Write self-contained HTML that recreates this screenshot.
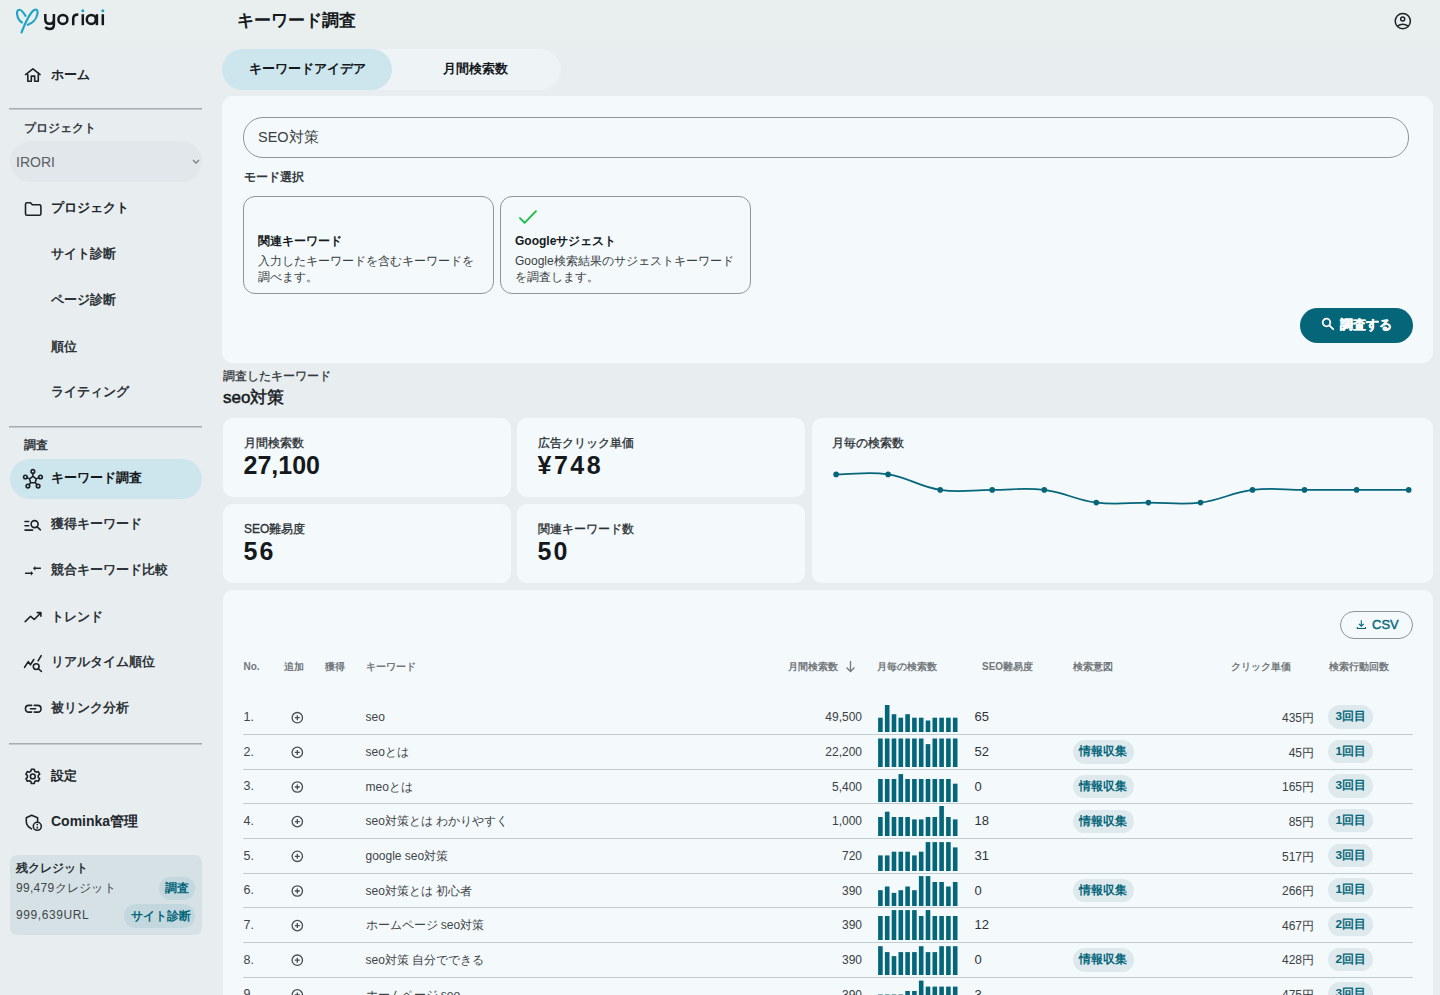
<!DOCTYPE html>
<html lang="ja"><head><meta charset="utf-8"><title>キーワード調査</title>
<style>
html,body{margin:0;padding:0}
body{width:1440px;height:995px;overflow:hidden;position:relative;background:#e8edf0;font-family:"Liberation Sans",sans-serif}
.t{position:absolute;white-space:nowrap}
.b{position:absolute}
</style></head><body>
<div class="b" style="left:0px;top:0px;width:1440px;height:70px;background:linear-gradient(#e8efee 0px,#e8efee 30px,#e8edf0 65px)"></div>
<svg class="b" style="left:0px;top:0px;" width="110" height="40" viewBox="0 0 110 40"><path d="M25.5 15.9 C23.5 12.5 21.5 9.8 19.5 9.8 C17.3 9.8 16.7 12 17.1 14.5 C17.7 18 19.5 21 22 22.5" fill="none" stroke="#1ea3c6" stroke-width="2.1" stroke-linecap="round"/>
<path d="M21.5 32.5 C24 26 28 17 31.5 12.5 C33 10.5 34.5 9.5 35.7 9.5 C37.6 9.5 37.9 12 37.3 14.5 C36.2 19.5 32 23.5 27.8 24.8" fill="none" stroke="#1ea3c6" stroke-width="2.1" stroke-linecap="round"/>
<g fill="none" stroke="#15191c" stroke-width="2.5">
<path d="M45.3 14 V19.3 Q45.3 23.8 49.6 23.8 Q53.9 23.8 53.9 19.3 V14 M53.9 19 V25 Q53.9 29 49.6 29 Q47 29 45.3 27.2"/>
<circle cx="62.9" cy="19.4" r="4.5"/>
<path d="M73.2 25.2 V18.8 Q73.2 14.6 78.3 14.6"/>
<path d="M82.8 14.2 V25.2"/>
<circle cx="91.3" cy="19.4" r="4.5"/>
<path d="M96.9 14.2 V25.2"/>
<path d="M102.8 14.2 V25.2"/>
</g>
<circle cx="82.8" cy="10.8" r="1.5" fill="#1ea3c6"/><circle cx="102.8" cy="10.8" r="1.5" fill="#1ea3c6"/></svg>
<div class="t" style="left:51px;top:66.7px;font-size:13px;line-height:15.6px;font-weight:700;color:#22272b;">ホーム</div>
<div class="b" style="left:9px;top:108px;width:193px;height:2px;background:linear-gradient(#a6adb0 50%,#c4cacd 50%)"></div>
<div class="t" style="left:24px;top:121.3px;font-size:12px;line-height:14.4px;font-weight:700;color:#33393d;">プロジェクト</div>
<div class="b" style="left:10px;top:141px;width:192px;height:41px;background:#e1e7ea;border-radius:21px"></div>
<div class="t" style="left:16px;top:153.6px;font-size:14px;line-height:16.8px;font-weight:400;color:#5a6063;">IRORI</div>
<svg class="b" style="left:192px;top:159px;" width="8" height="6" viewBox="0 0 8 6"><path d="M1 1 L4 4 L7 1" fill="none" stroke="#7d8285" stroke-width="1.3"/></svg>
<div class="t" style="left:51px;top:199.7px;font-size:13px;line-height:15.6px;font-weight:700;color:#22272b;">プロジェクト</div>
<div class="t" style="left:51px;top:246.2px;font-size:13px;line-height:15.6px;font-weight:700;color:#2e3438;">サイト診断</div>
<div class="t" style="left:51px;top:292.2px;font-size:13px;line-height:15.6px;font-weight:700;color:#2e3438;">ページ診断</div>
<div class="t" style="left:51px;top:338.7px;font-size:13px;line-height:15.6px;font-weight:700;color:#2e3438;">順位</div>
<div class="t" style="left:51px;top:384.2px;font-size:13px;line-height:15.6px;font-weight:700;color:#2e3438;">ライティング</div>
<div class="b" style="left:9px;top:426px;width:193px;height:2px;background:linear-gradient(#a6adb0 50%,#c4cacd 50%)"></div>
<div class="t" style="left:24px;top:438.3px;font-size:12px;line-height:14.4px;font-weight:700;color:#33393d;">調査</div>
<div class="b" style="left:10px;top:459px;width:192px;height:40px;background:#cde5ed;border-radius:20px"></div>
<div class="t" style="left:51px;top:470.2px;font-size:13px;line-height:15.6px;font-weight:700;color:#15191c;">キーワード調査</div>
<div class="t" style="left:51px;top:516.2px;font-size:13px;line-height:15.6px;font-weight:700;color:#2e3438;">獲得キーワード</div>
<div class="t" style="left:51px;top:562.2px;font-size:13px;line-height:15.6px;font-weight:700;color:#2e3438;">競合キーワード比較</div>
<div class="t" style="left:51px;top:608.7px;font-size:13px;line-height:15.6px;font-weight:700;color:#2e3438;">トレンド</div>
<div class="t" style="left:51px;top:654.2px;font-size:13px;line-height:15.6px;font-weight:700;color:#2e3438;">リアルタイム順位</div>
<div class="t" style="left:51px;top:700.2px;font-size:13px;line-height:15.6px;font-weight:700;color:#2e3438;">被リンク分析</div>
<div class="b" style="left:9px;top:743px;width:193px;height:2px;background:linear-gradient(#a6adb0 50%,#c4cacd 50%)"></div>
<div class="t" style="left:51px;top:768.2px;font-size:13px;line-height:15.6px;font-weight:700;color:#22272b;">設定</div>
<div class="t" style="left:51px;top:814.2px;font-size:13px;line-height:15.6px;font-weight:700;color:#22272b;font-size:14px">Cominka管理</div>
<div class="b" style="left:10px;top:855px;width:192px;height:80px;background:#d6e1e6;border-radius:7px"></div>
<div class="t" style="left:16px;top:860.8px;font-size:12px;line-height:14.4px;font-weight:700;color:#2b3134;">残クレジット</div>
<div class="t" style="left:16px;top:881.3px;font-size:12px;line-height:14.4px;font-weight:400;color:#3f4548;letter-spacing:0.3px">99,479クレジット</div>
<div class="t" style="left:16px;top:908.3px;font-size:12px;line-height:14.4px;font-weight:400;color:#3f4548;letter-spacing:0.6px">999,639URL</div>
<div class="b" style="left:159px;top:877px;width:36px;height:23px;background:#c3d8de;border-radius:12px"></div>
<div class="t" style="left:165px;top:881.3px;font-size:12px;line-height:14.4px;font-weight:700;color:#05667a;">調査</div>
<div class="b" style="left:124px;top:904px;width:71px;height:24px;background:#c3d8de;border-radius:12px"></div>
<div class="t" style="left:131px;top:908.8px;font-size:12px;line-height:14.4px;font-weight:700;color:#05667a;">サイト診断</div>
<div class="t" style="left:237px;top:11.1px;font-size:17px;line-height:20.4px;font-weight:700;color:#15191c;">キーワード調査</div>
<div class="b" style="left:222px;top:49px;width:339px;height:41px;background:#eef3f6;border-radius:21px"></div>
<div class="b" style="left:222px;top:49px;width:170px;height:41px;background:#cde5ed;border-radius:21px"></div>
<div class="t" style="left:249px;top:61.2px;font-size:13px;line-height:15.6px;font-weight:700;color:#15191c;">キーワードアイデア</div>
<div class="t" style="left:443px;top:61.2px;font-size:13px;line-height:15.6px;font-weight:700;color:#15191c;">月間検索数</div>
<div class="b" style="left:222px;top:96px;width:1211px;height:267px;background:#f4f9fc;border-radius:11px"></div>
<div class="b" style="left:243px;top:117px;width:1166px;height:41px;border:1px solid #8e9699;border-radius:20px;box-sizing:border-box"></div>
<div class="t" style="left:258px;top:129.3px;font-size:14.5px;line-height:17.4px;font-weight:400;color:#3a3f42;">SEO対策</div>
<div class="t" style="left:244px;top:169.8px;font-size:12px;line-height:14.4px;font-weight:700;color:#33393d;">モード選択</div>
<div class="b" style="left:243px;top:196px;width:251px;height:98px;border:1px solid #8e9699;border-radius:12px;box-sizing:border-box"></div>
<div class="b" style="left:500px;top:196px;width:251px;height:98px;border:1px solid #8e9699;border-radius:12px;box-sizing:border-box"></div>
<div class="t" style="left:258px;top:233.8px;font-size:12px;line-height:14.4px;font-weight:700;color:#15191c;">関連キーワード</div>
<div class="t" style="left:258px;top:253.8px;font-size:12px;line-height:14.4px;font-weight:400;color:#3a3f42;">入力したキーワードを含むキーワードを</div>
<div class="t" style="left:258px;top:269.8px;font-size:12px;line-height:14.4px;font-weight:400;color:#3a3f42;">調べます。</div>
<div class="t" style="left:515px;top:233.8px;font-size:12px;line-height:14.4px;font-weight:700;color:#15191c;">Googleサジェスト</div>
<div class="t" style="left:515px;top:253.8px;font-size:12px;line-height:14.4px;font-weight:400;color:#3a3f42;">Google検索結果のサジェストキーワード</div>
<div class="t" style="left:515px;top:269.8px;font-size:12px;line-height:14.4px;font-weight:400;color:#3a3f42;">を調査します。</div>
<div class="b" style="left:1300px;top:308px;width:113px;height:35px;background:#05667a;border-radius:18px"></div>
<svg class="b" style="left:1321px;top:317px;" width="14" height="14" viewBox="0 0 14 14"><circle cx="5.5" cy="5.5" r="3.8" fill="none" stroke="#fff" stroke-width="1.8"/><path d="M8.3 8.3 L12.2 12.2" stroke="#fff" stroke-width="1.9" stroke-linecap="round"/></svg>
<div class="t" style="left:1340px;top:317.2px;font-size:13px;line-height:15.6px;font-weight:700;color:#ffffff;-webkit-text-stroke:0.3px #fff">調査する</div>
<div class="t" style="left:223px;top:368.8px;font-size:12px;line-height:14.4px;font-weight:400;color:#33393c;-webkit-text-stroke:0.3px #33393c">調査したキーワード</div>
<div class="t" style="left:223px;top:388.3px;font-size:17px;line-height:20.4px;font-weight:400;color:#15191c;-webkit-text-stroke:0.5px #15191c">seo対策</div>
<div class="b" style="left:223px;top:418px;width:288px;height:79px;background:#f4f9fc;border-radius:10px"></div>
<div class="t" style="left:244px;top:435.8px;font-size:12px;line-height:14.4px;font-weight:400;color:#2a3033;-webkit-text-stroke:0.3px #2a3033">月間検索数</div>
<div class="t" style="left:243.5px;top:449.5px;font-size:25px;line-height:30.0px;font-weight:700;color:#15191c;letter-spacing:0px">27,100</div>
<div class="b" style="left:517px;top:418px;width:288px;height:79px;background:#f4f9fc;border-radius:10px"></div>
<div class="t" style="left:538px;top:435.8px;font-size:12px;line-height:14.4px;font-weight:400;color:#2a3033;-webkit-text-stroke:0.3px #2a3033">広告クリック単価</div>
<div class="t" style="left:537.5px;top:449.5px;font-size:25px;line-height:30.0px;font-weight:700;color:#15191c;letter-spacing:2.5px">¥748</div>
<div class="b" style="left:223px;top:504px;width:288px;height:79px;background:#f4f9fc;border-radius:10px"></div>
<div class="t" style="left:244px;top:521.8px;font-size:12px;line-height:14.4px;font-weight:400;color:#2a3033;-webkit-text-stroke:0.3px #2a3033">SEO難易度</div>
<div class="t" style="left:243.5px;top:535.5px;font-size:25px;line-height:30.0px;font-weight:700;color:#15191c;letter-spacing:2px">56</div>
<div class="b" style="left:517px;top:504px;width:288px;height:79px;background:#f4f9fc;border-radius:10px"></div>
<div class="t" style="left:538px;top:521.8px;font-size:12px;line-height:14.4px;font-weight:400;color:#2a3033;-webkit-text-stroke:0.3px #2a3033">関連キーワード数</div>
<div class="t" style="left:537.5px;top:535.5px;font-size:25px;line-height:30.0px;font-weight:700;color:#15191c;letter-spacing:2px">50</div>
<div class="b" style="left:812px;top:418px;width:621px;height:165px;background:#f4f9fc;border-radius:10px"></div>
<div class="t" style="left:832px;top:436.3px;font-size:12px;line-height:14.4px;font-weight:400;color:#2a3033;-webkit-text-stroke:0.3px #2a3033">月毎の検索数</div>
<svg class="b" style="left:0;top:0" width="1440" height="995"><path d="M836.1 474.4 C856.9 474.4 867.8 471.4 888.1 474.4 C909.4 477.6 918.9 486.7 940.2 489.9 C960.6 492.9 971.4 489.9 992.2 489.9 C1013.1 489.9 1023.8 487.4 1044.3 489.9 C1065.4 492.5 1075.2 500.0 1096.3 502.6 C1116.9 505.1 1127.6 502.6 1148.4 502.6 C1169.2 502.6 1179.9 505.1 1200.5 502.6 C1221.6 500.0 1231.4 492.5 1252.5 489.9 C1273.0 487.4 1283.7 489.9 1304.5 489.9 C1325.4 489.9 1335.8 489.9 1356.6 489.9 C1377.4 489.9 1387.8 489.9 1408.7 489.9" fill="none" stroke="#05667a" stroke-width="1.7"/><circle cx="836.1" cy="474.4" r="2.8" fill="#05667a"/><circle cx="888.1" cy="474.4" r="2.8" fill="#05667a"/><circle cx="940.2" cy="489.9" r="2.8" fill="#05667a"/><circle cx="992.2" cy="489.9" r="2.8" fill="#05667a"/><circle cx="1044.3" cy="489.9" r="2.8" fill="#05667a"/><circle cx="1096.3" cy="502.6" r="2.8" fill="#05667a"/><circle cx="1148.4" cy="502.6" r="2.8" fill="#05667a"/><circle cx="1200.5" cy="502.6" r="2.8" fill="#05667a"/><circle cx="1252.5" cy="489.9" r="2.8" fill="#05667a"/><circle cx="1304.5" cy="489.9" r="2.8" fill="#05667a"/><circle cx="1356.6" cy="489.9" r="2.8" fill="#05667a"/><circle cx="1408.7" cy="489.9" r="2.8" fill="#05667a"/></svg>
<div class="b" style="left:223px;top:590px;width:1210px;height:420px;background:#f4f9fc;border-radius:10px"></div>
<div class="b" style="left:1340px;top:611px;width:73px;height:28px;border:1px solid #8e9699;border-radius:15px;box-sizing:border-box"></div>
<div class="t" style="left:1372px;top:617.0px;font-size:13px;line-height:15.6px;font-weight:400;color:#05667a;-webkit-text-stroke:0.4px #05667a">CSV</div>
<div class="t" style="left:243.5px;top:660.6px;font-size:10px;line-height:12.0px;font-weight:700;color:#72787b;">No.</div>
<div class="t" style="left:284px;top:660.6px;font-size:10px;line-height:12.0px;font-weight:700;color:#72787b;">追加</div>
<div class="t" style="left:324.5px;top:660.6px;font-size:10px;line-height:12.0px;font-weight:700;color:#72787b;">獲得</div>
<div class="t" style="left:365.5px;top:660.6px;font-size:10px;line-height:12.0px;font-weight:700;color:#72787b;">キーワード</div>
<div class="t" style="left:788px;top:660.6px;font-size:10px;line-height:12.0px;font-weight:700;color:#72787b;">月間検索数</div>
<div class="t" style="left:876.5px;top:660.6px;font-size:10px;line-height:12.0px;font-weight:700;color:#72787b;">月毎の検索数</div>
<div class="t" style="left:982px;top:660.6px;font-size:10px;line-height:12.0px;font-weight:700;color:#72787b;">SEO難易度</div>
<div class="t" style="left:1073px;top:660.6px;font-size:10px;line-height:12.0px;font-weight:700;color:#72787b;">検索意図</div>
<div class="t" style="left:1231px;top:660.6px;font-size:10px;line-height:12.0px;font-weight:700;color:#72787b;">クリック単価</div>
<div class="t" style="left:1328.5px;top:660.6px;font-size:10px;line-height:12.0px;font-weight:700;color:#72787b;">検索行動回数</div>
<svg class="b" style="left:845px;top:660px;" width="11" height="13" viewBox="0 0 11 13"><path d="M5.5 1 V11.5 M1.5 7.5 L5.5 11.5 L9.5 7.5" fill="none" stroke="#72787b" stroke-width="1.3"/></svg>
<div class="t" style="left:243.5px;top:710.1px;font-size:12.5px;line-height:15.0px;font-weight:400;color:#3f4548;">1.</div>
<div class="t" style="left:365.5px;top:710.4px;font-size:12px;line-height:14.4px;font-weight:400;color:#3f4548;">seo</div>
<div class="t" style="right:578px;top:710.4px;font-size:12px;line-height:14.4px;font-weight:400;color:#3a4044;text-align:right;">49,500</div>
<svg class="b" style="left:878.3px;top:702.3px" width="80" height="30"><rect x="0.1" y="15.7" width="4.6" height="14.3" fill="#05667a"/><rect x="6.9" y="3.0" width="4.6" height="27.0" fill="#05667a"/><rect x="13.7" y="12.2" width="4.6" height="17.8" fill="#05667a"/><rect x="20.5" y="15.7" width="4.6" height="14.3" fill="#05667a"/><rect x="27.3" y="12.2" width="4.6" height="17.8" fill="#05667a"/><rect x="34.1" y="15.7" width="4.6" height="14.3" fill="#05667a"/><rect x="40.9" y="15.7" width="4.6" height="14.3" fill="#05667a"/><rect x="47.7" y="18.5" width="4.6" height="11.5" fill="#05667a"/><rect x="54.5" y="15.7" width="4.6" height="14.3" fill="#05667a"/><rect x="61.3" y="15.7" width="4.6" height="14.3" fill="#05667a"/><rect x="68.1" y="15.7" width="4.6" height="14.3" fill="#05667a"/><rect x="74.9" y="15.7" width="4.6" height="14.3" fill="#05667a"/></svg>
<div class="t" style="left:974.5px;top:709.3px;font-size:13px;line-height:15.6px;font-weight:400;color:#2e3438;">65</div>
<div class="t" style="right:126px;top:710.9px;font-size:12px;line-height:14.4px;font-weight:400;color:#3a4044;text-align:right;">435円</div>
<div class="t" style="left:1328px;top:705.0px;height:23.5px;line-height:23px;padding:0 6.5px 0 7.5px;border-radius:12px;background:#dde9ed;font-size:11.8px;font-weight:700;color:#05667a">3回目</div>
<div class="b" style="left:243px;top:734.0px;width:1170px;height:1px;background:#bfccd1"></div>
<div class="t" style="left:243.5px;top:744.8px;font-size:12.5px;line-height:15.0px;font-weight:400;color:#3f4548;">2.</div>
<div class="t" style="left:365.5px;top:745.0px;font-size:12px;line-height:14.4px;font-weight:400;color:#3f4548;">seoとは</div>
<div class="t" style="right:578px;top:745.0px;font-size:12px;line-height:14.4px;font-weight:400;color:#3a4044;text-align:right;">22,200</div>
<svg class="b" style="left:878.3px;top:737.0px" width="80" height="30"><rect x="0.1" y="1.5" width="4.6" height="28.5" fill="#05667a"/><rect x="6.9" y="1.5" width="4.6" height="28.5" fill="#05667a"/><rect x="13.7" y="1.5" width="4.6" height="28.5" fill="#05667a"/><rect x="20.5" y="1.5" width="4.6" height="28.5" fill="#05667a"/><rect x="27.3" y="1.5" width="4.6" height="28.5" fill="#05667a"/><rect x="34.1" y="1.5" width="4.6" height="28.5" fill="#05667a"/><rect x="40.9" y="1.5" width="4.6" height="28.5" fill="#05667a"/><rect x="47.7" y="7.1" width="4.6" height="22.9" fill="#05667a"/><rect x="54.5" y="1.5" width="4.6" height="28.5" fill="#05667a"/><rect x="61.3" y="1.5" width="4.6" height="28.5" fill="#05667a"/><rect x="68.1" y="1.5" width="4.6" height="28.5" fill="#05667a"/><rect x="74.9" y="1.5" width="4.6" height="28.5" fill="#05667a"/></svg>
<div class="t" style="left:974.5px;top:744.0px;font-size:13px;line-height:15.6px;font-weight:400;color:#2e3438;">52</div>
<div class="t" style="left:1072.5px;top:740.2px;height:23.5px;line-height:23.5px;padding:0 6.5px 0 6.5px;border-radius:12px;background:#dde9ed;font-size:11.5px;font-weight:700;color:#05667a">情報収集</div>
<div class="t" style="right:126px;top:745.5px;font-size:12px;line-height:14.4px;font-weight:400;color:#3a4044;text-align:right;">45円</div>
<div class="t" style="left:1328px;top:739.6px;height:23.5px;line-height:23px;padding:0 6.5px 0 7.5px;border-radius:12px;background:#dde9ed;font-size:11.8px;font-weight:700;color:#05667a">1回目</div>
<div class="b" style="left:243px;top:768.6px;width:1170px;height:1px;background:#bfccd1"></div>
<div class="t" style="left:243.5px;top:779.4px;font-size:12.5px;line-height:15.0px;font-weight:400;color:#3f4548;">3.</div>
<div class="t" style="left:365.5px;top:779.7px;font-size:12px;line-height:14.4px;font-weight:400;color:#3f4548;">meoとは</div>
<div class="t" style="right:578px;top:779.7px;font-size:12px;line-height:14.4px;font-weight:400;color:#3a4044;text-align:right;">5,400</div>
<svg class="b" style="left:878.3px;top:771.6px" width="80" height="30"><rect x="0.1" y="7.0" width="4.6" height="23.0" fill="#05667a"/><rect x="6.9" y="7.0" width="4.6" height="23.0" fill="#05667a"/><rect x="13.7" y="7.0" width="4.6" height="23.0" fill="#05667a"/><rect x="20.5" y="2.1" width="4.6" height="27.9" fill="#05667a"/><rect x="27.3" y="7.0" width="4.6" height="23.0" fill="#05667a"/><rect x="34.1" y="7.0" width="4.6" height="23.0" fill="#05667a"/><rect x="40.9" y="7.0" width="4.6" height="23.0" fill="#05667a"/><rect x="47.7" y="7.0" width="4.6" height="23.0" fill="#05667a"/><rect x="54.5" y="7.0" width="4.6" height="23.0" fill="#05667a"/><rect x="61.3" y="7.0" width="4.6" height="23.0" fill="#05667a"/><rect x="68.1" y="7.0" width="4.6" height="23.0" fill="#05667a"/><rect x="74.9" y="11.7" width="4.6" height="18.3" fill="#05667a"/></svg>
<div class="t" style="left:974.5px;top:778.6px;font-size:13px;line-height:15.6px;font-weight:400;color:#2e3438;">0</div>
<div class="t" style="left:1072.5px;top:774.9px;height:23.5px;line-height:23.5px;padding:0 6.5px 0 6.5px;border-radius:12px;background:#dde9ed;font-size:11.5px;font-weight:700;color:#05667a">情報収集</div>
<div class="t" style="right:126px;top:780.2px;font-size:12px;line-height:14.4px;font-weight:400;color:#3a4044;text-align:right;">165円</div>
<div class="t" style="left:1328px;top:774.3px;height:23.5px;line-height:23px;padding:0 6.5px 0 7.5px;border-radius:12px;background:#dde9ed;font-size:11.8px;font-weight:700;color:#05667a">3回目</div>
<div class="b" style="left:243px;top:803.3px;width:1170px;height:1px;background:#bfccd1"></div>
<div class="t" style="left:243.5px;top:814.0px;font-size:12.5px;line-height:15.0px;font-weight:400;color:#3f4548;">4.</div>
<div class="t" style="left:365.5px;top:814.3px;font-size:12px;line-height:14.4px;font-weight:400;color:#3f4548;">seo対策とは わかりやすく</div>
<div class="t" style="right:578px;top:814.3px;font-size:12px;line-height:14.4px;font-weight:400;color:#3a4044;text-align:right;">1,000</div>
<svg class="b" style="left:878.3px;top:806.3px" width="80" height="30"><rect x="0.1" y="11.0" width="4.6" height="19.0" fill="#05667a"/><rect x="6.9" y="5.7" width="4.6" height="24.3" fill="#05667a"/><rect x="13.7" y="11.0" width="4.6" height="19.0" fill="#05667a"/><rect x="20.5" y="11.0" width="4.6" height="19.0" fill="#05667a"/><rect x="27.3" y="11.0" width="4.6" height="19.0" fill="#05667a"/><rect x="34.1" y="13.4" width="4.6" height="16.6" fill="#05667a"/><rect x="40.9" y="13.4" width="4.6" height="16.6" fill="#05667a"/><rect x="47.7" y="11.0" width="4.6" height="19.0" fill="#05667a"/><rect x="54.5" y="11.0" width="4.6" height="19.0" fill="#05667a"/><rect x="61.3" y="-0.2" width="4.6" height="30.2" fill="#05667a"/><rect x="68.1" y="11.0" width="4.6" height="19.0" fill="#05667a"/><rect x="74.9" y="13.4" width="4.6" height="16.6" fill="#05667a"/></svg>
<div class="t" style="left:974.5px;top:813.2px;font-size:13px;line-height:15.6px;font-weight:400;color:#2e3438;">18</div>
<div class="t" style="left:1072.5px;top:809.5px;height:23.5px;line-height:23.5px;padding:0 6.5px 0 6.5px;border-radius:12px;background:#dde9ed;font-size:11.5px;font-weight:700;color:#05667a">情報収集</div>
<div class="t" style="right:126px;top:814.8px;font-size:12px;line-height:14.4px;font-weight:400;color:#3a4044;text-align:right;">85円</div>
<div class="t" style="left:1328px;top:808.9px;height:23.5px;line-height:23px;padding:0 6.5px 0 7.5px;border-radius:12px;background:#dde9ed;font-size:11.8px;font-weight:700;color:#05667a">1回目</div>
<div class="b" style="left:243px;top:838.0px;width:1170px;height:1px;background:#bfccd1"></div>
<div class="t" style="left:243.5px;top:848.7px;font-size:12.5px;line-height:15.0px;font-weight:400;color:#3f4548;">5.</div>
<div class="t" style="left:365.5px;top:849.0px;font-size:12px;line-height:14.4px;font-weight:400;color:#3f4548;">google seo対策</div>
<div class="t" style="right:578px;top:849.0px;font-size:12px;line-height:14.4px;font-weight:400;color:#3a4044;text-align:right;">720</div>
<svg class="b" style="left:878.3px;top:840.9px" width="80" height="30"><rect x="0.1" y="14.4" width="4.6" height="15.6" fill="#05667a"/><rect x="6.9" y="14.4" width="4.6" height="15.6" fill="#05667a"/><rect x="13.7" y="10.7" width="4.6" height="19.3" fill="#05667a"/><rect x="20.5" y="10.7" width="4.6" height="19.3" fill="#05667a"/><rect x="27.3" y="10.7" width="4.6" height="19.3" fill="#05667a"/><rect x="34.1" y="14.4" width="4.6" height="15.6" fill="#05667a"/><rect x="40.9" y="10.7" width="4.6" height="19.3" fill="#05667a"/><rect x="47.7" y="1.1" width="4.6" height="28.9" fill="#05667a"/><rect x="54.5" y="1.1" width="4.6" height="28.9" fill="#05667a"/><rect x="61.3" y="1.1" width="4.6" height="28.9" fill="#05667a"/><rect x="68.1" y="1.1" width="4.6" height="28.9" fill="#05667a"/><rect x="74.9" y="6.4" width="4.6" height="23.6" fill="#05667a"/></svg>
<div class="t" style="left:974.5px;top:847.9px;font-size:13px;line-height:15.6px;font-weight:400;color:#2e3438;">31</div>
<div class="t" style="right:126px;top:849.5px;font-size:12px;line-height:14.4px;font-weight:400;color:#3a4044;text-align:right;">517円</div>
<div class="t" style="left:1328px;top:843.6px;height:23.5px;line-height:23px;padding:0 6.5px 0 7.5px;border-radius:12px;background:#dde9ed;font-size:11.8px;font-weight:700;color:#05667a">3回目</div>
<div class="b" style="left:243px;top:872.6px;width:1170px;height:1px;background:#bfccd1"></div>
<div class="t" style="left:243.5px;top:883.4px;font-size:12.5px;line-height:15.0px;font-weight:400;color:#3f4548;">6.</div>
<div class="t" style="left:365.5px;top:883.6px;font-size:12px;line-height:14.4px;font-weight:400;color:#3f4548;">seo対策とは 初心者</div>
<div class="t" style="right:578px;top:883.6px;font-size:12px;line-height:14.4px;font-weight:400;color:#3a4044;text-align:right;">390</div>
<svg class="b" style="left:878.3px;top:875.6px" width="80" height="30"><rect x="0.1" y="14.2" width="4.6" height="15.8" fill="#05667a"/><rect x="6.9" y="10.5" width="4.6" height="19.5" fill="#05667a"/><rect x="13.7" y="16.9" width="4.6" height="13.1" fill="#05667a"/><rect x="20.5" y="14.2" width="4.6" height="15.8" fill="#05667a"/><rect x="27.3" y="10.5" width="4.6" height="19.5" fill="#05667a"/><rect x="34.1" y="14.2" width="4.6" height="15.8" fill="#05667a"/><rect x="40.9" y="0.1" width="4.6" height="29.9" fill="#05667a"/><rect x="47.7" y="0.1" width="4.6" height="29.9" fill="#05667a"/><rect x="54.5" y="6.0" width="4.6" height="24.0" fill="#05667a"/><rect x="61.3" y="6.0" width="4.6" height="24.0" fill="#05667a"/><rect x="68.1" y="10.5" width="4.6" height="19.5" fill="#05667a"/><rect x="74.9" y="6.0" width="4.6" height="24.0" fill="#05667a"/></svg>
<div class="t" style="left:974.5px;top:882.6px;font-size:13px;line-height:15.6px;font-weight:400;color:#2e3438;">0</div>
<div class="t" style="left:1072.5px;top:878.9px;height:23.5px;line-height:23.5px;padding:0 6.5px 0 6.5px;border-radius:12px;background:#dde9ed;font-size:11.5px;font-weight:700;color:#05667a">情報収集</div>
<div class="t" style="right:126px;top:884.1px;font-size:12px;line-height:14.4px;font-weight:400;color:#3a4044;text-align:right;">266円</div>
<div class="t" style="left:1328px;top:878.2px;height:23.5px;line-height:23px;padding:0 6.5px 0 7.5px;border-radius:12px;background:#dde9ed;font-size:11.8px;font-weight:700;color:#05667a">1回目</div>
<div class="b" style="left:243px;top:907.2px;width:1170px;height:1px;background:#bfccd1"></div>
<div class="t" style="left:243.5px;top:918.0px;font-size:12.5px;line-height:15.0px;font-weight:400;color:#3f4548;">7.</div>
<div class="t" style="left:365.5px;top:918.3px;font-size:12px;line-height:14.4px;font-weight:400;color:#3f4548;">ホームページ seo対策</div>
<div class="t" style="right:578px;top:918.3px;font-size:12px;line-height:14.4px;font-weight:400;color:#3a4044;text-align:right;">390</div>
<svg class="b" style="left:878.3px;top:910.2px" width="80" height="30"><rect x="0.1" y="6.0" width="4.6" height="24.0" fill="#05667a"/><rect x="6.9" y="6.0" width="4.6" height="24.0" fill="#05667a"/><rect x="13.7" y="0.1" width="4.6" height="29.9" fill="#05667a"/><rect x="20.5" y="0.1" width="4.6" height="29.9" fill="#05667a"/><rect x="27.3" y="0.1" width="4.6" height="29.9" fill="#05667a"/><rect x="34.1" y="0.1" width="4.6" height="29.9" fill="#05667a"/><rect x="40.9" y="6.0" width="4.6" height="24.0" fill="#05667a"/><rect x="47.7" y="0.1" width="4.6" height="29.9" fill="#05667a"/><rect x="54.5" y="6.0" width="4.6" height="24.0" fill="#05667a"/><rect x="61.3" y="6.0" width="4.6" height="24.0" fill="#05667a"/><rect x="68.1" y="6.0" width="4.6" height="24.0" fill="#05667a"/><rect x="74.9" y="6.0" width="4.6" height="24.0" fill="#05667a"/></svg>
<div class="t" style="left:974.5px;top:917.2px;font-size:13px;line-height:15.6px;font-weight:400;color:#2e3438;">12</div>
<div class="t" style="right:126px;top:918.8px;font-size:12px;line-height:14.4px;font-weight:400;color:#3a4044;text-align:right;">467円</div>
<div class="t" style="left:1328px;top:912.9px;height:23.5px;line-height:23px;padding:0 6.5px 0 7.5px;border-radius:12px;background:#dde9ed;font-size:11.8px;font-weight:700;color:#05667a">2回目</div>
<div class="b" style="left:243px;top:941.9px;width:1170px;height:1px;background:#bfccd1"></div>
<div class="t" style="left:243.5px;top:952.6px;font-size:12.5px;line-height:15.0px;font-weight:400;color:#3f4548;">8.</div>
<div class="t" style="left:365.5px;top:952.9px;font-size:12px;line-height:14.4px;font-weight:400;color:#3f4548;">seo対策 自分でできる</div>
<div class="t" style="right:578px;top:952.9px;font-size:12px;line-height:14.4px;font-weight:400;color:#3a4044;text-align:right;">390</div>
<svg class="b" style="left:878.3px;top:944.9px" width="80" height="30"><rect x="0.1" y="1.2" width="4.6" height="28.8" fill="#05667a"/><rect x="6.9" y="7.1" width="4.6" height="22.9" fill="#05667a"/><rect x="13.7" y="11.1" width="4.6" height="18.9" fill="#05667a"/><rect x="20.5" y="7.1" width="4.6" height="22.9" fill="#05667a"/><rect x="27.3" y="7.1" width="4.6" height="22.9" fill="#05667a"/><rect x="34.1" y="7.1" width="4.6" height="22.9" fill="#05667a"/><rect x="40.9" y="1.2" width="4.6" height="28.8" fill="#05667a"/><rect x="47.7" y="7.1" width="4.6" height="22.9" fill="#05667a"/><rect x="54.5" y="7.1" width="4.6" height="22.9" fill="#05667a"/><rect x="61.3" y="1.2" width="4.6" height="28.8" fill="#05667a"/><rect x="68.1" y="1.2" width="4.6" height="28.8" fill="#05667a"/><rect x="74.9" y="1.2" width="4.6" height="28.8" fill="#05667a"/></svg>
<div class="t" style="left:974.5px;top:951.9px;font-size:13px;line-height:15.6px;font-weight:400;color:#2e3438;">0</div>
<div class="t" style="left:1072.5px;top:948.1px;height:23.5px;line-height:23.5px;padding:0 6.5px 0 6.5px;border-radius:12px;background:#dde9ed;font-size:11.5px;font-weight:700;color:#05667a">情報収集</div>
<div class="t" style="right:126px;top:953.4px;font-size:12px;line-height:14.4px;font-weight:400;color:#3a4044;text-align:right;">428円</div>
<div class="t" style="left:1328px;top:947.5px;height:23.5px;line-height:23px;padding:0 6.5px 0 7.5px;border-radius:12px;background:#dde9ed;font-size:11.8px;font-weight:700;color:#05667a">2回目</div>
<div class="b" style="left:243px;top:976.5px;width:1170px;height:1px;background:#bfccd1"></div>
<div class="t" style="left:243.5px;top:987.3px;font-size:12.5px;line-height:15.0px;font-weight:400;color:#3f4548;">9.</div>
<div class="t" style="left:365.5px;top:987.6px;font-size:12px;line-height:14.4px;font-weight:400;color:#3f4548;">ホームページ seo</div>
<div class="t" style="right:578px;top:987.6px;font-size:12px;line-height:14.4px;font-weight:400;color:#3a4044;text-align:right;">390</div>
<svg class="b" style="left:878.3px;top:979.5px" width="80" height="30"><rect x="0.1" y="14.5" width="4.6" height="15.5" fill="#05667a"/><rect x="6.9" y="14.5" width="4.6" height="15.5" fill="#05667a"/><rect x="13.7" y="14.5" width="4.6" height="15.5" fill="#05667a"/><rect x="20.5" y="14.5" width="4.6" height="15.5" fill="#05667a"/><rect x="27.3" y="11.0" width="4.6" height="19.0" fill="#05667a"/><rect x="34.1" y="11.0" width="4.6" height="19.0" fill="#05667a"/><rect x="40.9" y="0.6" width="4.6" height="29.4" fill="#05667a"/><rect x="47.7" y="6.6" width="4.6" height="23.4" fill="#05667a"/><rect x="54.5" y="6.6" width="4.6" height="23.4" fill="#05667a"/><rect x="61.3" y="6.6" width="4.6" height="23.4" fill="#05667a"/><rect x="68.1" y="6.6" width="4.6" height="23.4" fill="#05667a"/><rect x="74.9" y="6.6" width="4.6" height="23.4" fill="#05667a"/></svg>
<div class="t" style="left:974.5px;top:986.5px;font-size:13px;line-height:15.6px;font-weight:400;color:#2e3438;">3</div>
<div class="t" style="right:126px;top:988.1px;font-size:12px;line-height:14.4px;font-weight:400;color:#3a4044;text-align:right;">475円</div>
<div class="t" style="left:1328px;top:982.2px;height:23.5px;line-height:23px;padding:0 6.5px 0 7.5px;border-radius:12px;background:#dde9ed;font-size:11.8px;font-weight:700;color:#05667a">3回目</div>
<svg class="b" style="left:0;top:0" width="1440" height="995"><path d="M25.5 74.6 L32.9 68.8 L40.1 74.6 M27.8 72.8 V81.3 H31.3 V76.1 H34.7 V81.3 H38.3 V72.8" fill="none" stroke="#1d2226" stroke-width="1.6" stroke-linecap="round" stroke-linejoin="round"/><path d="M25.5 204.3 Q25.5 202.8 27 202.8 H30.5 L32.3 204.8 H39.4 Q40.9 204.8 40.9 206.3 V213.7 Q40.9 215.2 39.4 215.2 H27 Q25.5 215.2 25.5 213.7 Z" fill="none" stroke="#1d2226" stroke-width="1.6" stroke-linecap="round" stroke-linejoin="round"/><g fill="none" stroke="#1d2226" stroke-width="1.6" stroke-linecap="round" stroke-linejoin="round" stroke-width="1.4"><circle cx="32.9" cy="471.4" r="1.8"/><circle cx="25.4" cy="477" r="1.8"/><circle cx="40.5" cy="477" r="1.8"/><circle cx="27.9" cy="486.1" r="1.8"/><circle cx="38.1" cy="486.1" r="1.8"/><path d="M32.9 476.4 L36.3 478.9 L35.1 482.7 H30.7 L29.5 478.9 Z M32.9 473.2 V476.4 M27.1 477.6 L29.5 478.9 M38.8 477.6 L36.3 478.9 M28.9 484.6 L30.7 482.7 M37.1 484.6 L35.1 482.7"/></g><g fill="none" stroke="#1d2226" stroke-width="1.6" stroke-linecap="round" stroke-linejoin="round" stroke-width="1.5"><path d="M25 521.5 H28.7 M25 525.7 H28.7 M25 530.1 H32.6 M37.2 526.8 L40.4 529.8"/><circle cx="34.6" cy="524.1" r="3.5"/></g><g fill="#1d2226"><path d="M25 572.6 H31 V574 H25 Z M30.9 570.9 L33.2 573.3 L30.9 575.7 Z M40.9 567.6 H35.2 V569 H40.9 Z M35.3 565.9 L33 568.3 L35.3 570.7 Z"/></g><path d="M25.2 621.6 L30.6 616.3 L34.2 619.5 L40.2 613.5 M37.3 612.6 H40.9 V616.2" fill="none" stroke="#1d2226" stroke-width="1.6" stroke-linecap="round" stroke-linejoin="round" stroke-width="1.5" stroke-linecap="butt"/><g fill="none" stroke="#1d2226" stroke-width="1.6" stroke-linecap="round" stroke-linejoin="round" stroke-width="1.5"><path d="M24.6 667.3 L28.3 661.6 L30.4 664.8 L33.8 659.5 M38.1 660.8 L41.2 655.6 M38.6 669 L41.4 671.4"/><circle cx="36.2" cy="666.6" r="2.9"/></g><path d="M31.6 705.4 H28.8 A3.35 3.35 0 0 0 28.8 712.1 H31.6 M34.3 705.4 H37.7 A3.35 3.35 0 0 1 37.7 712.1 H34.3 M30.5 708.7 H35.6" fill="none" stroke="#1d2226" stroke-width="1.6" stroke-linecap="round" stroke-linejoin="round" stroke-width="1.6"/><path d="M30.86 771.25 L31.35 769.25 L34.25 769.25 L34.74 771.25 L36.29 772.15 L38.27 771.57 L39.72 774.08 L38.23 775.50 L38.23 777.30 L39.72 778.72 L38.27 781.23 L36.29 780.65 L34.74 781.55 L34.25 783.55 L31.35 783.55 L30.86 781.55 L29.31 780.65 L27.33 781.23 L25.88 778.72 L27.37 777.30 L27.37 775.50 L25.88 774.08 L27.33 771.57 L29.31 772.15 Z" fill="none" stroke="#1d2226" stroke-width="1.6" stroke-linecap="round" stroke-linejoin="round" stroke-width="1.5"/><circle cx="32.8" cy="776.4" r="2.4" fill="none" stroke="#1d2226" stroke-width="1.6" stroke-linecap="round" stroke-linejoin="round" stroke-width="1.5"/><g fill="none" stroke="#1d2226" stroke-width="1.6" stroke-linecap="round" stroke-linejoin="round" stroke-width="1.5"><path d="M37.6 821.4 V817.8 L31.6 815.3 L26.3 817.8 V821.5 Q26.3 826 31.6 828.9"/><circle cx="37.3" cy="826.3" r="4"/><path d="M37.3 824.6 V824.8 M37.3 827.2 V828"/></g><g fill="none" stroke="#1d2226" stroke-width="1.5"><circle cx="1402.8" cy="21.1" r="7.6"/><circle cx="1402.7" cy="19.1" r="2"/><path d="M1397.3 26.1 Q1402.8 22.6 1408.3 26.1"/></g><path d="M520 218.1 L524.6 222.8 L536 211.2" fill="none" stroke="#1bbf45" stroke-width="1.9" stroke-linecap="round" stroke-linejoin="round"/><g fill="none" stroke="#05667a" stroke-width="1.1"><path d="M1361.3 620.2 V626 M1358.9 623.8 L1361.3 626.2 L1363.7 623.8 M1357.3 627 V628.5 H1365.5 V627"/></g><g fill="none" stroke="#464c4f" stroke-width="1.3"><circle cx="297.3" cy="717.7" r="5.2"/><path d="M297.3 715.2 V720.2 M294.8 717.7 H299.8"/></g><g fill="none" stroke="#464c4f" stroke-width="1.3"><circle cx="297.3" cy="752.4" r="5.2"/><path d="M297.3 749.9 V754.9 M294.8 752.4 H299.8"/></g><g fill="none" stroke="#464c4f" stroke-width="1.3"><circle cx="297.3" cy="787.0" r="5.2"/><path d="M297.3 784.5 V789.5 M294.8 787.0 H299.8"/></g><g fill="none" stroke="#464c4f" stroke-width="1.3"><circle cx="297.3" cy="821.6" r="5.2"/><path d="M297.3 819.1 V824.1 M294.8 821.6 H299.8"/></g><g fill="none" stroke="#464c4f" stroke-width="1.3"><circle cx="297.3" cy="856.3" r="5.2"/><path d="M297.3 853.8 V858.8 M294.8 856.3 H299.8"/></g><g fill="none" stroke="#464c4f" stroke-width="1.3"><circle cx="297.3" cy="891.0" r="5.2"/><path d="M297.3 888.5 V893.5 M294.8 891.0 H299.8"/></g><g fill="none" stroke="#464c4f" stroke-width="1.3"><circle cx="297.3" cy="925.6" r="5.2"/><path d="M297.3 923.1 V928.1 M294.8 925.6 H299.8"/></g><g fill="none" stroke="#464c4f" stroke-width="1.3"><circle cx="297.3" cy="960.2" r="5.2"/><path d="M297.3 957.8 V962.8 M294.8 960.2 H299.8"/></g><g fill="none" stroke="#464c4f" stroke-width="1.3"><circle cx="297.3" cy="994.9" r="5.2"/><path d="M297.3 992.4 V997.4 M294.8 994.9 H299.8"/></g></svg>
</body></html>
